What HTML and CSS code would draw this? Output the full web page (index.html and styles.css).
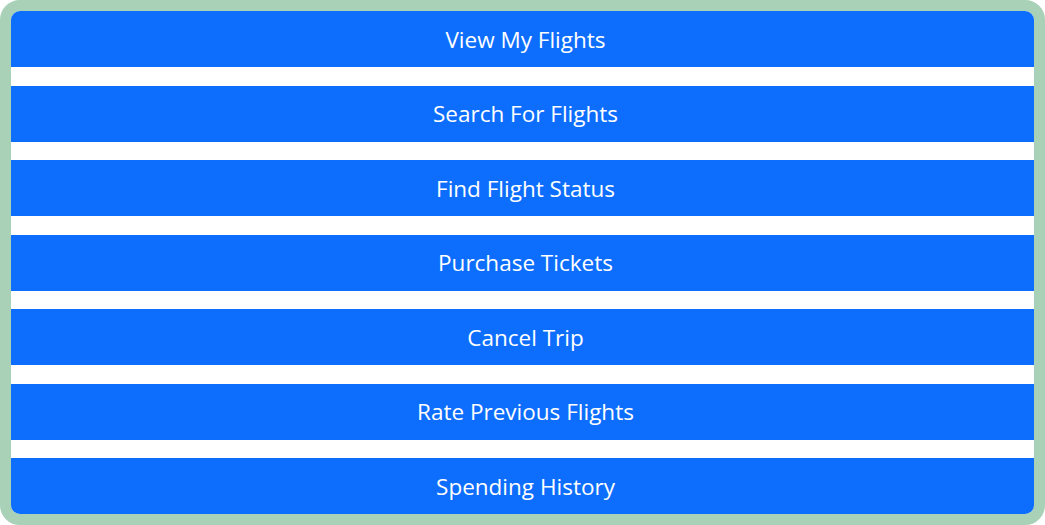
FILE: index.html
```html
<!DOCTYPE html>
<html>
<head>
<meta charset="utf-8">
<link rel="stylesheet" href="styles.css">
</head>
<body>
<div class="panel">
  <button class="btn">View My Flights</button>
  <button class="btn">Search For Flights</button>
  <button class="btn">Find Flight Status</button>
  <button class="btn">Purchase Tickets</button>
  <button class="btn">Cancel Trip</button>
  <button class="btn">Rate Previous Flights</button>
  <button class="btn">Spending History</button>
</div>
</body>
</html>
```
FILE: styles.css
```css
html, body {
  margin: 0;
  padding: 0;
  background: #ffffff;
}
.panel {
  box-sizing: border-box;
  width: 1045px;
  height: 525px;
  border: 11px solid #a9d1b8;
  border-radius: 20px;
  overflow: hidden;
  background: #ffffff;
  display: flex;
  flex-direction: column;
  justify-content: space-between;
}
.btn {
  height: 56px;
  flex: 0 0 56px;
  border: none;
  margin: 0;
  padding: 0 0 0 6px;
  background: #0d6efd;
  color: #ffffff;
  font-family: "Open Sans", "Noto Sans", sans-serif;
  font-size: 22.5px;
  text-align: center;
}
```
